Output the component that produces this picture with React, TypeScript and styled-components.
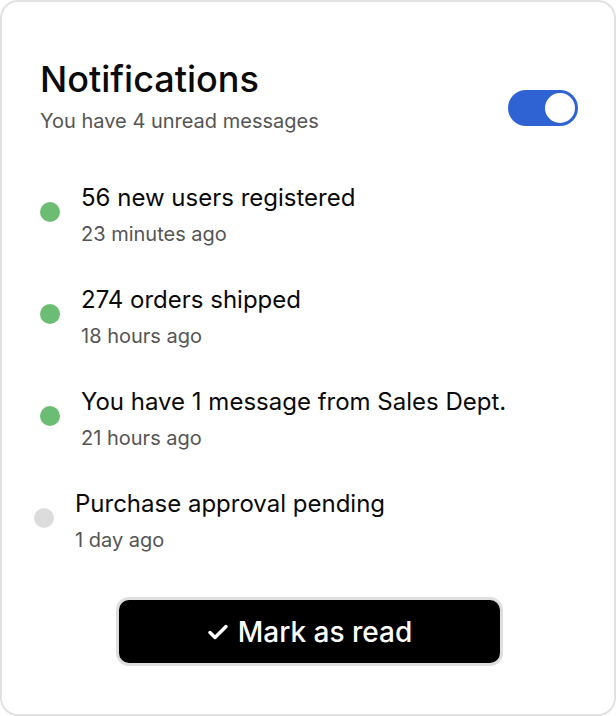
import React from "react";
import styled, { createGlobalStyle } from "styled-components";

const Global = createGlobalStyle`
  html, body { margin: 0; padding: 0; background: #fff; }
  body { font-family: Inter, "Noto Sans", sans-serif; }
  * { box-sizing: border-box; }
`;

const Card = styled.div`
  width: 616px;
  height: 716px;
  border: 2px solid #e2e2e2;
  border-radius: 18px;
  background: #fff;
  padding: 55px 36px 0 38px;
  display: flex;
  flex-direction: column;
`;

const Header = styled.div`
  display: flex;
  align-items: flex-end;
  justify-content: space-between;
`;

const HeaderText = styled.div`
  display: flex;
  flex-direction: column;
`;

const Title = styled.h1`
  margin: 0;
  font-size: 36px;
  font-weight: 500;
  line-height: 44px;
  color: #0a0a0a;
`;

const Subtitle = styled.p`
  margin: 7px 0 0;
  font-size: 20px;
  line-height: 26px;
  color: #555;
`;

const Toggle = styled.div`
  width: 70px;
  height: 36px;
  border-radius: 18px;
  background: #2f63d4;
  display: flex;
  align-items: center;
  justify-content: flex-end;
  padding: 1px;
  margin-bottom: 8px;
`;

const Knob = styled.div`
  width: 34px;
  height: 34px;
  border-radius: 50%;
  background: #fff;
  border: 2px solid #2f63d4;
`;

const List = styled.div`
  display: flex;
  flex-direction: column;
  margin-top: 49px;
`;

const Item = styled.div<{ $shift?: number }>`
  display: flex;
  align-items: flex-start;
  height: 102px;
  margin-left: ${(p) => -(p.$shift ?? 0)}px;
`;

const Dot = styled.span<{ $unread: boolean }>`
  width: 20px;
  height: 20px;
  border-radius: 50%;
  flex: none;
  background: ${(p) => (p.$unread ? "#6cbd74" : "#dcdcdc")};
  margin-top: 19px;
`;

const ItemText = styled.div`
  margin-left: 21px;
  display: flex;
  flex-direction: column;
`;

const ItemTitle = styled.div`
  font-size: 24px;
  line-height: 30px;
  color: #0a0a0a;
`;

const ItemTime = styled.div`
  margin-top: 8px;
  font-size: 20px;
  line-height: 26px;
  color: #555;
`;

const Footer = styled.div`
  display: flex;
  justify-content: center;
  margin-top: 6px;
`;

const Button = styled.button`
  width: 387px;
  height: 69px;
  border: 3px solid #dedede;
  border-radius: 13px;
  background: #000;
  color: #fff;
  font-family: Inter, "Noto Sans", sans-serif;
  font-size: 28px;
  font-weight: 500;
  display: flex;
  align-items: center;
  justify-content: center;
  gap: 8px;
  cursor: pointer;
`;

const items = [
  { title: "56 new users registered", time: "23 minutes ago", unread: true },
  { title: "274 orders shipped", time: "18 hours ago", unread: true },
  { title: "You have 1 message from Sales Dept.", time: "21 hours ago", unread: true },
  { title: "Purchase approval pending", time: "1 day ago", unread: false, shift: 6 },
];

export default function App() {
  return (
    <>
      <Global />
      <Card>
        <Header>
          <HeaderText>
            <Title>Notifications</Title>
            <Subtitle>You have 4 unread messages</Subtitle>
          </HeaderText>
          <Toggle>
            <Knob />
          </Toggle>
        </Header>
        <List>
          {items.map((it) => (
            <Item key={it.title} $shift={it.shift}>
              <Dot $unread={it.unread} />
              <ItemText>
                <ItemTitle>{it.title}</ItemTitle>
                <ItemTime>{it.time}</ItemTime>
              </ItemText>
            </Item>
          ))}
        </List>
        <Footer>
          <Button>
            <svg width="24" height="24" viewBox="0 0 24 24" fill="none" stroke="#fff" strokeWidth="3.5" strokeLinecap="round" strokeLinejoin="round">
              <path d="M4 12.5l5 5L20 6.5" />
            </svg>
            Mark as read
          </Button>
        </Footer>
      </Card>
    </>
  );
}
